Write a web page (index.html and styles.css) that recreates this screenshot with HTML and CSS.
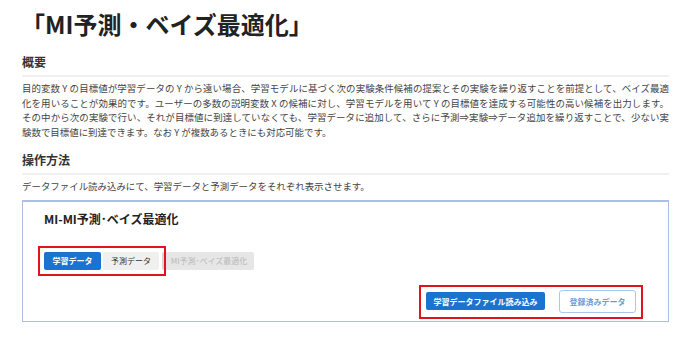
FILE: index.html
```
<!DOCTYPE html>
<html lang="ja">
<head>
	<meta charset="UTF-8">
	<title>MI予測・ベイズ最適化</title>
	<link rel="stylesheet" href="styles.css">
</head>
<body>
	<div class="page">
		<h1 class="title">「MI予測・ベイズ最適化」</h1>

		<h2 class="section">概要</h2>
		<p class="desc">目的変数 Y の目標値が学習データの Y から遠い場合、学習モデルに基づく次の実験条件候補の提案とその実験を繰り返すことを前提として、ベイズ最適化を用いることが効果的です。ユーザーの多数の説明変数 X の候補に対し、学習モデルを用いて Y の目標値を達成する可能性の高い候補を出力します。その中から次の実験で行い、それが目標値に到達していなくても、学習データに追加して、さらに予測⇒実験⇒データ追加を繰り返すことで、少ない実験数で目標値に到達できます。なお Y が複数あるときにも対応可能です。</p>

		<h2 class="section">操作方法</h2>
		<p class="desc">データファイル読み込みにて、学習データと予測データをそれぞれ表示させます。</p>

		<div class="panel">
			<h3 class="panel-title">MI-MI予測･ベイズ最適化</h3>
			<div class="tabs">
				<button class="tab active">学習データ</button>
				<button class="tab">予測データ</button>
				<button class="tab disabled">MI予測･ベイズ最適化</button>
				<span class="mark mark-tabs"></span>
			</div>
			<div class="actions">
				<button class="btn btn-primary">学習データファイル読み込み</button>
				<button class="btn btn-outline">登録済みデータ</button>
				<span class="mark mark-actions"></span>
			</div>
		</div>
	</div>
</body>
</html>
```
FILE: styles.css
```
*{
	margin:0;
	padding:0;
	box-sizing: border-box;
}
body{
	background: #fff;
	color: #333;
	font-family: "Noto Sans CJK JP", "Noto Sans", sans-serif;
}
.page{
	width:647px;
	margin-left:22px;
	padding-top:6px;
}
.title{
	font-size: 24px;
	line-height: 36px;
	font-weight: bold;
	color: #222;
	margin-left:-1px;
}
.section{
	font-size: 12px;
	line-height: 16px;
	font-weight: bold;
	color: #333;
	padding-bottom:5px;
	border-bottom: 2px solid #f0f0f0;
	margin-top:12px;
}
.section + .desc{
	margin-top:4px;
}
.desc{
	font-size: 9.45px;
	line-height: 14.7px;
	color: #444;
	text-align: justify;
}
.panel{
	margin-top:6px;
	border:1px solid #abbfe2;
	border-top-width: 2px;
	height: 122px;
	padding:8px 21px 0;
}
.panel-title{
	font-size: 12px;
	line-height: 18px;
	font-weight: bold;
	color: #222;
}
.tabs{
	position: relative;
	display: flex;
	gap:2px;
	margin-top:24px;
}
.tab{
	height: 18px;
	width:56px;
	border:none;
	border-radius: 2px;
	background: #f0f0f0;
	color: #333;
	font-family: inherit;
	font-size: 8px;
	white-space: nowrap;
}
.tab.active{
	width:57px;
	background: #1a73d0;
	color: #fff;
	font-weight: bold;
}
.tab.disabled{
	margin-left:1px;
	width:92px;
	background: #e6e6e6;
	color: #b8b8b8;
	border-left:2px solid #d6d6d6;
}
.actions{
	position: relative;
	display: flex;
	justify-content: flex-end;
	align-items: center;
	gap:14px;
	margin-top:20px;
	padding-right:11px;
}
.btn{
	font-family: inherit;
	font-size: 8px;
	font-weight: bold;
	border-radius: 2px;
	white-space: nowrap;
}
.btn-primary{
	width:119px;
	height: 18px;
	border:none;
	background: #1a73d0;
	color: #fff;
}
.btn-outline{
	width:77px;
	height: 23px;
	border:1px solid #a9c9ec;
	background: #fff;
	color: #6d9cd3;
	border-radius: 3px;
}
.mark{
	position: absolute;
	border:2px solid #e0141e;
	pointer-events: none;
}
.mark-tabs{
	left:-6px;
	top:-6px;
	width:128px;
	height: 30px;
}
.mark-actions{
	right:4px;
	top:-5px;
	width:224px;
	height: 34px;
}
```
